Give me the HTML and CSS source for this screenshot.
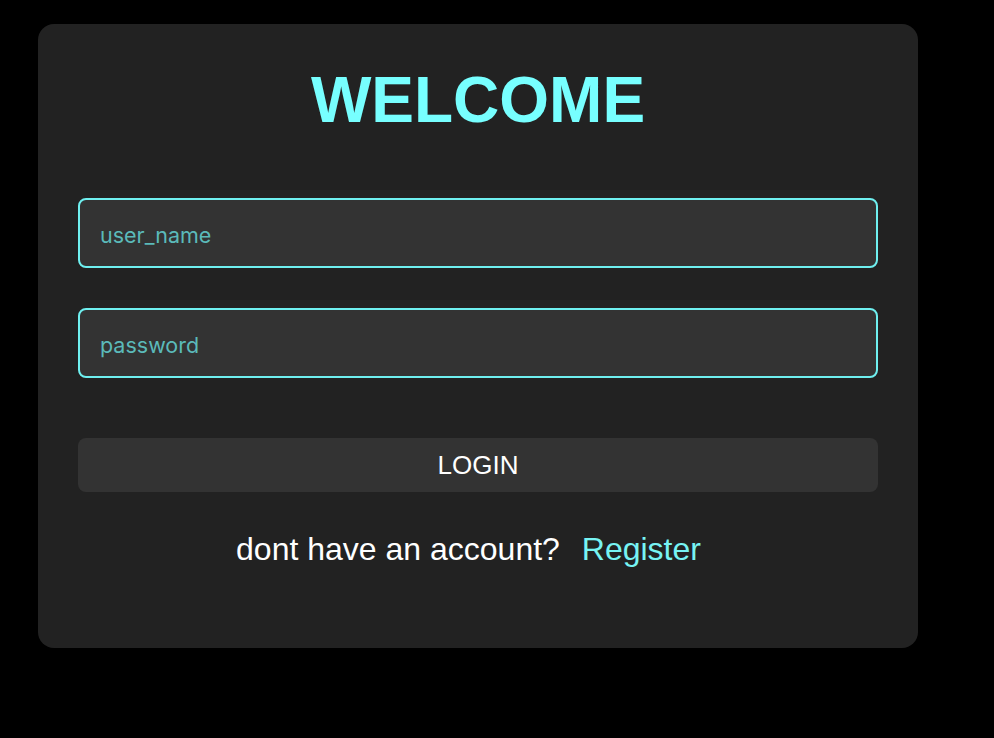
FILE: index.html
```html
<!DOCTYPE html>
<html>
<head>
<meta charset="utf-8">
<link rel="stylesheet" href="styles.css">
</head>
<body>
<div class="card">
  <h1 class="title">WELCOME</h1>
  <form class="form">
    <input class="field" type="text" placeholder="user_name">
    <input class="field" type="password" placeholder="password">
    <button class="btn" type="button">LOGIN</button>
  </form>
  <p class="footer">dont have an account? <a class="link" href="#">Register</a></p>
</div>
</body>
</html>
```
FILE: styles.css
```css
html, body {
  margin: 0;
  padding: 0;
  background: #000;
  height: 100%;
}
body {
  font-family: "Liberation Sans", Arial, sans-serif;
  padding: 24px 0 0 38px;
  box-sizing: border-box;
}
.card {
  box-sizing: border-box;
  width: 880px;
  height: 624px;
  background: #222222;
  border-radius: 16px;
  padding: 40px 40px;
}
.title {
  margin: 0 0 62px;
  text-align: center;
  font-size: 64px;
  line-height: 72px;
  font-weight: bold;
  color: #77ffff;
}
.form {
  display: flex;
  flex-direction: column;
  gap: 40px;
  margin: 0;
}
.field {
  box-sizing: border-box;
  width: 800px;
  height: 70px;
  background: #333333;
  border: 2px solid #6ff0f0;
  border-radius: 8px;
  padding: 3px 20px 0;
  font-family: Inter, "Noto Sans", sans-serif;
  font-size: 21.5px;
  color: #5fc4c4;
  outline: none;
}
.field::placeholder {
  color: #5bbaba;
  opacity: 1;
}
.btn {
  box-sizing: border-box;
  width: 800px;
  height: 54px;
  margin-top: 20px;
  background: #333333;
  border: none;
  border-radius: 8px;
  color: #ffffff;
  font-family: "Liberation Sans", Arial, sans-serif;
  font-size: 26px;
  padding: 0;
}
.footer {
  margin: 39px 0 0;
  text-align: center;
  font-size: 32px;
  line-height: 36px;
  color: #ffffff;
}
.link {
  color: #77f4f4;
  text-decoration: none;
  margin-left: 13px;
  margin-right: 19px;
}
```
